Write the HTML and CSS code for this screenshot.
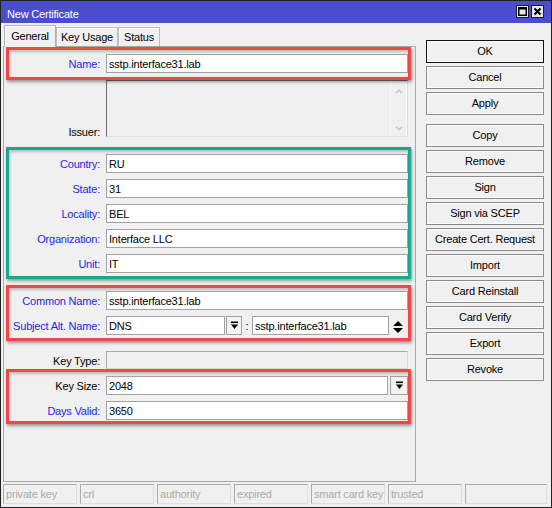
FILE: index.html
```html
<!DOCTYPE html>
<html>
<head>
<meta charset="utf-8">
<link rel="stylesheet" href="styles.css">
</head>
<body>
<div class="window">
  <div class="titlebar">
    <span class="title">New Certificate</span>
    <div class="tb-buttons">
      <span class="tb-btn"><svg width="9" height="9" viewBox="0 0 9 9"><rect x="0.75" y="0.75" width="7.5" height="7.5" fill="none" stroke="#000" stroke-width="1.5"/><rect x="0" y="0" width="9" height="2.5" fill="#000"/></svg></span>
      <span class="tb-btn"><svg width="9" height="9" viewBox="0 0 9 9"><path d="M1.5 1.5L7.5 7.5M7.5 1.5L1.5 7.5" stroke="#000" stroke-width="2"/></svg></span>
    </div>
  </div>
  <div class="main">
    <div class="left">
      <div class="tabs">
        <div class="tab active t-general">General</div>
        <div class="tab t-key">Key Usage</div>
        <div class="tab t-status">Status</div>
      </div>
      <div class="panel">
        <div class="box red box-name">
          <div class="row"><span class="lbl blue">Name:</span><div class="input">sstp.interface31.lab</div></div>
        </div>
        <div class="row plain row-issuer">
          <span class="lbl lbl-issuer">Issuer:</span>
          <div class="issuer">
            <div class="scroll">
              <svg width="8" height="5" viewBox="0 0 8 5"><path d="M0.8 4.3L4 1.2L7.2 4.3" fill="none" stroke="#c4c4c4" stroke-width="1.5"/></svg>
              <svg width="8" height="5" viewBox="0 0 8 5"><path d="M0.8 0.7L4 3.8L7.2 0.7" fill="none" stroke="#c4c4c4" stroke-width="1.5"/></svg>
            </div>
          </div>
        </div>
        <div class="box green box-green">
          <div class="row"><span class="lbl blue">Country:</span><div class="input">RU</div></div>
          <div class="row"><span class="lbl blue">State:</span><div class="input">31</div></div>
          <div class="row"><span class="lbl blue">Locality:</span><div class="input">BEL</div></div>
          <div class="row"><span class="lbl blue">Organization:</span><div class="input">Interface LLC</div></div>
          <div class="row"><span class="lbl blue">Unit:</span><div class="input">IT</div></div>
        </div>
        <div class="box red box-cn">
          <div class="row"><span class="lbl blue">Common Name:</span><div class="input">sstp.interface31.lab</div></div>
          <div class="row"><span class="lbl blue">Subject Alt. Name:</span>
            <div class="combo">
              <div class="input in-dns">DNS</div>
              <span class="ddbtn btn-dns"><svg width="9" height="9" viewBox="0 0 9 9"><rect x="1" y="0.5" width="7" height="1.6" fill="#000"/><path d="M1 3.6H8L4.5 8Z" fill="#000"/></svg></span>
              <span class="colon">:</span>
              <div class="input in-san">sstp.interface31.lab</div>
              <span class="spin"><svg width="10" height="12" viewBox="0 0 10 12"><path d="M0 5L5 0L10 5Z M0 7H10L5 12Z" fill="#000"/></svg></span>
            </div>
          </div>
        </div>
        <div class="row plain row-keytype"><span class="lbl">Key Type:</span><div class="input disabled"></div></div>
        <div class="box red box-key">
          <div class="row"><span class="lbl">Key Size:</span>
            <div class="combo">
              <div class="input in-keysize">2048</div>
              <span class="ddbtn btn-keysize"><svg width="9" height="9" viewBox="0 0 9 9"><rect x="1" y="0.5" width="7" height="1.6" fill="#000"/><path d="M1 3.6H8L4.5 8Z" fill="#000"/></svg></span>
            </div>
          </div>
          <div class="row"><span class="lbl blue">Days Valid:</span><div class="input">3650</div></div>
        </div>
      </div>
    </div>
    <div class="buttons">
      <div class="btn default">OK</div>
      <div class="btn">Cancel</div>
      <div class="btn">Apply</div>
      <div class="btn sep">Copy</div>
      <div class="btn">Remove</div>
      <div class="btn">Sign</div>
      <div class="btn">Sign via SCEP</div>
      <div class="btn">Create Cert. Request</div>
      <div class="btn">Import</div>
      <div class="btn">Card Reinstall</div>
      <div class="btn">Card Verify</div>
      <div class="btn">Export</div>
      <div class="btn">Revoke</div>
    </div>
  </div>
  <div class="statusbar">
    <div class="cell">private key</div>
    <div class="cell">crl</div>
    <div class="cell">authority</div>
    <div class="cell">expired</div>
    <div class="cell">smart card key</div>
    <div class="cell">trusted</div>
    <div class="cell last"></div>
  </div>
</div>
</body>
</html>
```
FILE: styles.css
```css
* { box-sizing: border-box; }
html, body { margin: 0; padding: 0; }
body {
  width: 552px;
  height: 508px;
  overflow: hidden;
  background: #f0f0f0;
  color: #000;
  font-family: "Liberation Sans", Arial, sans-serif;
  font-size: 11px;
  letter-spacing: -0.2px;
}
.window {
  width: 552px;
  height: 508px;
  border: 1px solid #202020;
  background: #f0f0f0;
  display: flex;
  flex-direction: column;
}
.titlebar {
  flex: none;
  height: 22px;
  background: #4a4ecd;
  color: #fff;
  display: flex;
  justify-content: space-between;
  align-items: flex-start;
  padding: 0 7px 0 6px;
}
.title { margin-top: 7px; line-height: 13px; }
.tb-buttons { display: flex; gap: 2px; margin-top: 4px; }
.tb-btn {
  width: 13px;
  height: 13px;
  background: #e6e6e6;
  border: 1px solid #1e1e1e;
  display: flex;
  align-items: center;
  justify-content: center;
}
.main {
  flex: 1;
  min-height: 0;
  display: flex;
  padding: 2px 0 0 2px;
}
.left {
  width: 413px;
  flex: none;
  display: flex;
  flex-direction: column;
}
.tabs {
  flex: none;
  height: 21px;
  display: flex;
  align-items: flex-end;
  padding-left: 1px;
}
.tab {
  height: 19px;
  line-height: 18px;
  text-align: center;
  border: 1px solid #bdbdbd;
  border-bottom: none;
  background: #f0f0f0;
  box-shadow: inset 1px 1px 0 #fbfbfb;
}
.tab.active {
  height: 22px;
  line-height: 20px;
  margin-bottom: -1px;
  position: relative;
  z-index: 2;
  border-color: #b0b0b0;
}
.t-general { width: 52px; }
.t-key { width: 62px; }
.t-status { width: 42px; }
.panel {
  flex: 1;
  border: 1px solid #a9a9a9;
  display: flex;
  flex-direction: column;
}
.box {
  margin-left: 2px;
  width: 405px;
  border: 3px solid;
  position: relative;
  z-index: 1;
  display: flex;
  flex-direction: column;
  gap: 6px;
  box-shadow: 1px 2px 3px rgba(0, 0, 0, 0.38), inset 1px 2px 3px rgba(0, 0, 0, 0.22);
}
.red { border-color: #f04848; }
.green { border-color: #17a98a; }
.box-name { padding: 4px 0 4px; }
.box-green { margin-top: 10px; padding: 4px 0 3px; }
.box-cn { margin-top: 6px; padding: 3px 0 3px; }
.box-key { padding: 4px 0 1px; }
.row {
  display: grid;
  grid-template-columns: 91px 302px;
  column-gap: 6px;
  height: 19px;
}
.plain { margin-left: 5px; }
.lbl {
  text-align: right;
  height: 19px;
  line-height: 21px;
  white-space: nowrap;
}
.blue { color: #1f1fe8; }
.input {
  height: 19px;
  border: 1px solid #a2a2a2;
  background: #fff;
  line-height: 19px;
  padding-left: 2px;
  white-space: nowrap;
}
.row-issuer { height: 57px; }
.lbl-issuer { align-self: end; margin-bottom: -4px; }
.issuer {
  height: 57px;
  border-left: 1px solid #6e6e6e;
  border-top: 1px solid #6e6e6e;
  border-right: 1px solid #dedede;
  border-bottom: 1px solid #e4e4e4;
  background: #f0f0f0;
  display: flex;
  justify-content: flex-end;
}
.scroll {
  width: 17px;
  border-left: 1px solid #fafafa;
  border-right: 1px solid #fafafa;
  display: flex;
  flex-direction: column;
  justify-content: space-between;
  align-items: center;
  padding: 8px 0 5px;
}
.combo { display: flex; align-items: stretch; }
.in-dns { width: 119px; }
.btn-dns { width: 16px; margin-left: 1px; }
.colon { width: 10px; text-align: center; line-height: 21px; }
.in-san { width: 137px; }
.spin {
  width: 19px;
  display: flex;
  align-items: center;
  padding-left: 4px;
}
.in-keysize { width: 282px; }
.btn-keysize { width: 18px; margin-left: 2px; }
.ddbtn {
  height: 19px;
  border: 1px solid #a0a0a0;
  background: #f3f3f3;
  display: flex;
  align-items: center;
  justify-content: center;
}
.row-keytype { margin-top: 10px; height: 18px; }
.row-keytype .input { height: 18px; }
.input.disabled {
  background: #f0f0f0;
  border-color: #ababab #dcdcdc #dcdcdc #ababab;
}
.buttons {
  width: 118px;
  flex: none;
  margin-left: 10px;
  margin-top: 15px;
  display: flex;
  flex-direction: column;
  gap: 3px;
}
.btn {
  height: 23px;
  border: 1px solid #8a8a8a;
  background: #f0f0f0;
  box-shadow: inset 0 0 0 1px #fbfbfb;
  text-align: center;
  line-height: 21px;
  white-space: nowrap;
}
.btn.default { border-color: #111; }
.btn.sep { margin-top: 6px; }
.statusbar {
  flex: none;
  height: 25px;
  display: flex;
  gap: 3px;
  padding: 2px 4px 3px 2px;
}
.cell {
  width: 74px;
  height: 20px;
  border: 1px solid;
  border-color: #ababab #dedede #dedede #ababab;
  color: #ababab;
  padding-left: 2px;
  line-height: 18px;
  white-space: nowrap;
  overflow: hidden;
}
.cell.last { flex: 1; width: auto; }
```
